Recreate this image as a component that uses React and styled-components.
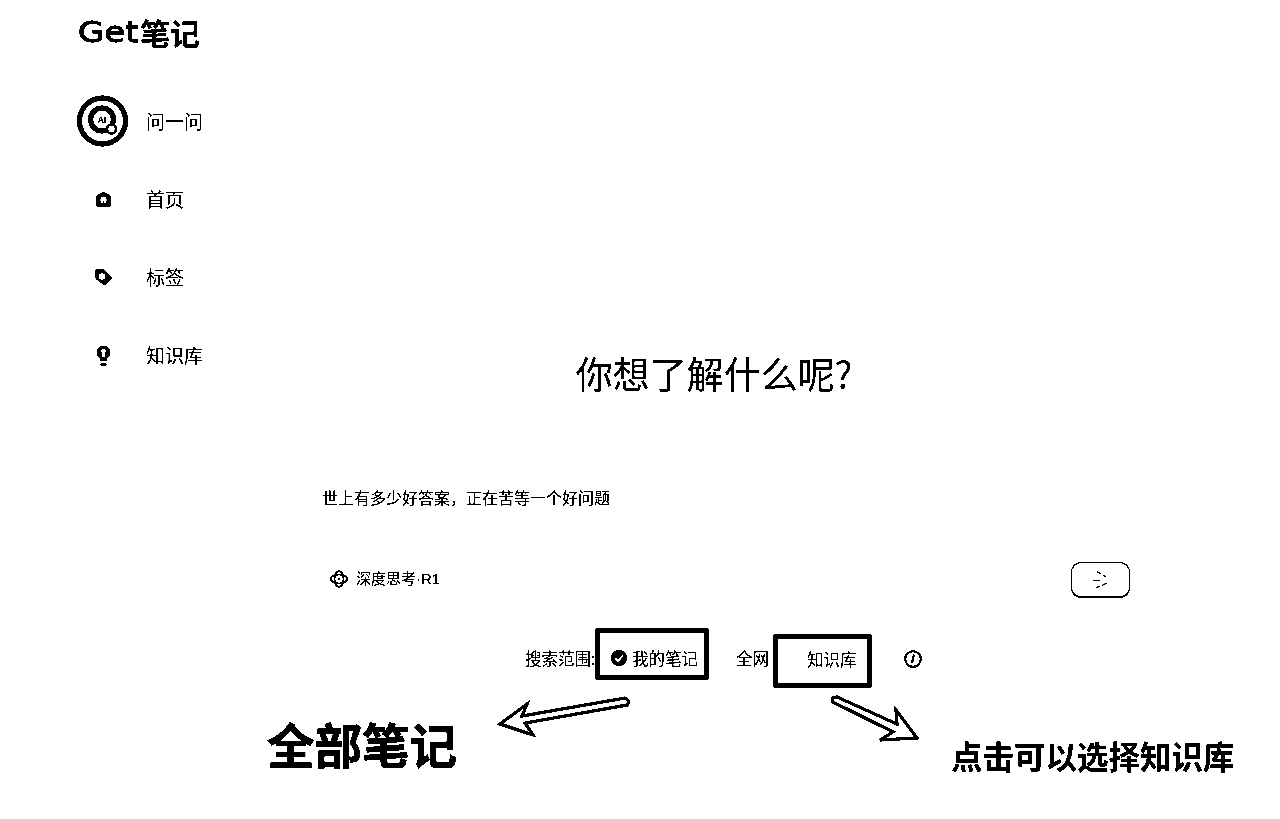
import React from 'react';
import styled, { createGlobalStyle } from 'styled-components';

const GlobalStyle = createGlobalStyle`
    html, body {
        margin: 0;
        background: #fff;
    }
    body {
        font-family: "Noto Sans CJK SC", "Noto Sans", sans-serif;
        color: #000;
    }
`;

// the reference is a pure black and white picture, this hardens every edge
const Page = styled.div`
    position: relative;
    display: flex;
    width: 1280px;
    height: 819px;
    overflow: hidden;
    background: #fff;
    filter: grayscale(1) brightness(0.8) contrast(100);
`;

const Sidebar = styled.aside`
    flex: none;
    box-sizing: border-box;
    width: 240px;
    padding: 12px 0 0 77px;
`;

const Logo = styled.div`
    display: flex;
    align-items: center;
    height: 40px;
    margin-left: 1px;
`;

const LogoLatin = styled.span`
    display: inline-block;
    width: 62px;
    font-family: "DejaVu Sans", sans-serif;
    font-size: 29px;
    font-weight: 400;
    -webkit-text-stroke: 0.8px #000;
    transform: scaleX(1.17);
    transform-origin: left center;
`;

const LogoCjk = styled.span`
    font-size: 30px;
    font-weight: 700;
    line-height: 40px;
`;

const Nav = styled.nav`
    display: flex;
    flex-direction: column;
    margin-top: 30px;
`;

const NavItem = styled.div`
    display: flex;
    align-items: center;
    gap: 17px;
    height: 78px;
`;

const NavIcon = styled.div`
    display: flex;
    align-items: center;
    justify-content: center;
    flex: none;
    width: 52px;
    height: 52px;
`;

const NavLabel = styled.span`
    font-size: 19px;
    line-height: 26px;
`;

const Main = styled.main`
    flex: 1;
    display: flex;
    flex-direction: column;
    padding-top: 348px;
`;

const Heading = styled.h1`
    width: 948px;
    margin: 0;
    font-size: 37px;
    font-weight: 400;
    line-height: 50px;
    text-align: center;
`;

const Composer = styled.div`
    display: flex;
    flex-direction: column;
    width: 808px;
    margin: 87px 0 0 82px;
`;

const Placeholder = styled.div`
    font-size: 16px;
    line-height: 24px;
`;

const ComposerBar = styled.div`
    display: flex;
    align-items: center;
    justify-content: space-between;
    margin-top: 53px;
    padding-left: 8px;
`;

const ModelTag = styled.div`
    display: flex;
    align-items: center;
    gap: 8px;
    margin-bottom: 3px;
    font-family: "Liberation Sans", "Noto Sans CJK SC", sans-serif;
    font-size: 15px;
    line-height: 20px;
`;

const SendButton = styled.button`
    display: flex;
    align-items: center;
    justify-content: center;
    box-sizing: border-box;
    width: 59px;
    height: 36px;
    padding: 0;
    background: #fff;
    border: 1px solid #000;
    border-bottom-width: 2px;
    border-radius: 10px;
`;

const ScopeRow = styled.div`
    display: flex;
    align-items: center;
    height: 60px;
    margin-top: 30px;
    padding-left: 285px;
    font-size: 16.5px;
    line-height: 24px;
`;

const ScopeLabel = styled.span`
    width: 70px;
    white-space: nowrap;
`;

const ScopeBox = styled.div`
    display: flex;
    align-items: center;
    gap: 5px;
    box-sizing: border-box;
    align-self: ${(p) => (p.$low ? 'flex-end' : 'flex-start')};
    width: ${(p) => p.$width}px;
    height: ${(p) => p.$height}px;
    margin-left: ${(p) => p.$left || 0}px;
    padding: ${(p) => (p.$low ? '0 0 4px 29px' : '8px 0 0 11px')};
    border: 5px solid #000;
    border-radius: 3px;
`;

const ScopeText = styled.span`
    margin-left: ${(p) => p.$left || 0}px;
    white-space: nowrap;
`;

const InfoMark = styled.svg`
    flex: none;
    margin: 2px 0 0 32px;
`;

const Callouts = styled.div`
    display: flex;
    align-items: flex-start;
    padding-left: 27px;
`;

const CalloutBig = styled.div`
    margin-top: 26px;
    font-size: 47.5px;
    font-weight: 700;
    line-height: 60px;
    white-space: nowrap;
    -webkit-text-stroke: 0.6px #000;
`;

const CalloutSmall = styled.div`
    margin: 47px 0 0 494px;
    font-size: 31.5px;
    font-weight: 700;
    line-height: 40px;
    white-space: nowrap;
`;

const ArrowLayer = styled.svg`
    position: absolute;
    top: 0;
    left: 0;
    pointer-events: none;
`;

const AskIcon = () => (
    <svg width="52" height="52" viewBox="0 0 52 52">
        <circle cx="25.5" cy="26" r="23" fill="none" stroke="#000" strokeWidth="5" />
        <circle cx="25" cy="24.5" r="11.5" fill="none" stroke="#000" strokeWidth="5" />
        <text x="25" y="27.5" fontSize="9" fontWeight="700" textAnchor="middle" fontFamily="Liberation Sans, sans-serif">AI</text>
        <circle cx="34.5" cy="34" r="4.5" fill="#fff" stroke="#000" strokeWidth="2.5" />
    </svg>
);

const HomeIcon = () => (
    <svg width="17" height="17" viewBox="0 0 17 17">
        <path d="M8.5 1 Q9.5 1 15 4.5 Q16 5 16 6.5 V14 Q16 16 14 16 H3 Q1 16 1 14 V6.5 Q1 5 2 4.5 Q7.5 1 8.5 1 Z" fill="#000" />
        <circle cx="8.5" cy="9" r="3.2" fill="#fff" />
        <rect x="8" y="10" width="1" height="2.2" fill="#000" />
    </svg>
);

const TagIcon = () => (
    <svg width="19" height="19" viewBox="0 0 19 19">
        <path d="M2 2 H10 L17.5 10 L10.5 17 L2 10.5 Z" fill="#000" stroke="#000" strokeLinejoin="round" />
        <circle cx="8" cy="8.5" r="3.2" fill="#fff" />
    </svg>
);

const BulbIcon = () => (
    <svg width="15" height="21" viewBox="0 0 15 21">
        <circle cx="7.5" cy="7.5" r="6.8" fill="#000" />
        <rect x="4.5" y="12" width="6" height="4" fill="#000" />
        <path d="M7.5 4 a2.4 2.4 0 0 1 1.5 4.3 V12 H6 V8.3 A2.4 2.4 0 0 1 7.5 4 Z" fill="#fff" />
        <rect x="4.5" y="18.5" width="6" height="2" fill="#000" />
    </svg>
);

const DeepIcon = () => (
    <svg width="18" height="18" viewBox="0 0 18 18" fill="none" stroke="#000" strokeWidth="1.4">
        <circle cx="9" cy="9" r="4.5" />
        <path d="M9 0.8 Q12.5 2 13 5 Q16 5.5 17.4 9 Q16 12.5 13 13 Q12.5 16 9 17.2 Q5.5 16 5 13 Q2 12.5 0.6 9 Q2 5.5 5 5 Q5.5 2 9 0.8 Z" />
        <circle cx="9" cy="9" r="1.2" fill="#000" stroke="none" />
    </svg>
);

const SendIcon = () => (
    <svg width="18" height="18" viewBox="0 0 18 18" fill="none" stroke="#000" strokeWidth="1.1">
        <path d="M5 0.5 L9 3" />
        <path d="M11 4 L14 6" />
        <path d="M1 9.5 H8" />
        <path d="M4 17 L8 15" />
        <path d="M10 14.5 L15 12" />
    </svg>
);

const CheckIcon = () => (
    <svg width="16" height="16" viewBox="0 0 16 16">
        <circle cx="8" cy="8" r="8" fill="#000" />
        <path d="M4.2 8.2 L7 11 L11.8 5.6" fill="none" stroke="#fff" strokeWidth="2" />
    </svg>
);

const navItems = [
    { label: '问一问', icon: <AskIcon /> },
    { label: '首页', icon: <HomeIcon /> },
    { label: '标签', icon: <TagIcon /> },
    { label: '知识库', icon: <BulbIcon /> },
];

const App = () => {
    return (
        <React.Fragment>
            <GlobalStyle />
            <Page>
                <Sidebar>
                    <Logo>
                        <LogoLatin>Get</LogoLatin>
                        <LogoCjk>笔记</LogoCjk>
                    </Logo>
                    <Nav>
                        {navItems.map((item) => (
                            <NavItem key={item.label}>
                                <NavIcon>{item.icon}</NavIcon>
                                <NavLabel>{item.label}</NavLabel>
                            </NavItem>
                        ))}
                    </Nav>
                </Sidebar>
                <Main>
                    <Heading>你想了解什么呢?</Heading>
                    <Composer>
                        <Placeholder>{'世上有多少好答案\uFF0C正在苦等一个好问题'}</Placeholder>
                        <ComposerBar>
                            <ModelTag>
                                <DeepIcon />
                                <span>深度思考·R1</span>
                            </ModelTag>
                            <SendButton>
                                <SendIcon />
                            </SendButton>
                        </ComposerBar>
                    </Composer>
                    <ScopeRow>
                        <ScopeLabel>搜索范围:</ScopeLabel>
                        <ScopeBox $width={114} $height={52}>
                            <CheckIcon />
                            <span>我的笔记</span>
                        </ScopeBox>
                        <ScopeText $left={27}>全网</ScopeText>
                        <ScopeBox $low $left={4} $width={99} $height={54}>
                            <span>知识库</span>
                        </ScopeBox>
                        <InfoMark width="18" height="18" viewBox="0 0 18 18" fill="none" stroke="#000">
                            <circle cx="9" cy="9" r="7.8" strokeWidth="2" />
                            <path d="M10 4.5 L8 13" strokeWidth="2" />
                        </InfoMark>
                    </ScopeRow>
                    <Callouts>
                        <CalloutBig>全部笔记</CalloutBig>
                        <CalloutSmall>点击可以选择知识库</CalloutSmall>
                    </Callouts>
                </Main>
                <ArrowLayer width="1280" height="819" viewBox="0 0 1280 819" fill="#fff" stroke="#000" strokeWidth="3">
                    <path d="M500 724 L527 704 L522 716 L625 698 Q631 701 627 705 L525 723 L533 735 Z" />
                    <path d="M833 702 Q830 697 837 697 L897 724 L896 710 L917 738 L880 740 L893 732 Z" />
                </ArrowLayer>
            </Page>
        </React.Fragment>
    );
};

export default App;
